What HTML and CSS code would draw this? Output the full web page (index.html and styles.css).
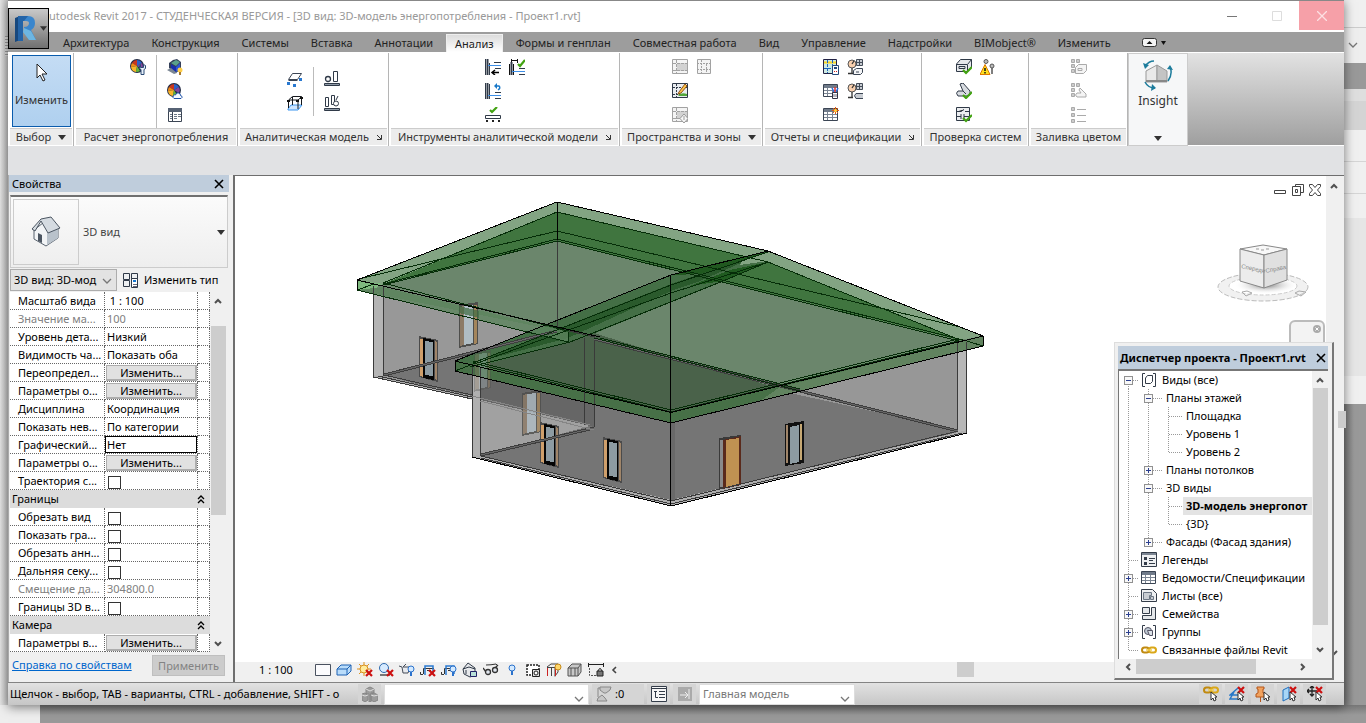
FILE: index.html
```html
<!DOCTYPE html>
<html lang="ru">

<head>
    <meta charset="UTF-8">
    <meta name="viewport" content="width=device-width, initial-scale=1.0">
    <title>Autodesk Revit 2017 - Проект1.rvt</title>
    <link rel="stylesheet" href="styles.css">
</head>

<body>
    <!-- Icon set -->
    <svg class="sprite" aria-hidden="true">
        <symbol id="i-pie" viewBox="0 0 16 16"><circle cx="7" cy="7" r="7" fill="#222b44"/><path d="M7 7V1a6 6 0 0 1 5 3z" fill="#2c62c9"/><path d="M7 7V1a6 6 0 0 0-5 3z" fill="#c9361f"/><path d="M7 7 2 4a6 6 0 0 0-1 4z" fill="#f08a16"/><path d="M7 7 1 8a6 6 0 0 0 5 5z" fill="#f8b52a"/><path d="M7 7l-1 6a6 6 0 0 0 4-1z" fill="#63b83a"/><path d="M7 7l5-3a6 6 0 0 1 0 6z" fill="#8246a0"/></symbol>
        <symbol id="i-energy" viewBox="0 0 16 16"><use href="#i-pie"/><path d="M10.500 5.500v3h3v-3l2 1v3l-1.500 1v5h-3v-5l-1.500-1v-3z" fill="#e8f0fa" stroke="#2b4a74"/></symbol>
        <symbol id="i-cloud" viewBox="0 0 16 16"><use href="#i-pie"/><path d="M7 15.500q-2-1-.5-3 1-1 2-.5 1-3 3-2 2 0 2 2.500 2 .5 1.500 2l-1 1z" fill="#f4f9ff" stroke="#1c50a8"/></symbol>
        <symbol id="i-globe" viewBox="0 0 16 16"><path d="M2 9V4l4-3 4-1 4 3v7l-5 4z" fill="#34405a"/><path d="M4 4l5-3 4 2-4 4z" fill="#5aa08c"/><path d="M4 5l5 3v5L4 10z" fill="#1a2fae"/><path d="M9 8l4-4v6l-4 3z" fill="#2f55d8"/><path d="M0 11l4-2 6 5-3 1z" fill="#7b8794"/><circle cx="13" cy="11" r="2.500" fill="#ffcf4a"/><path d="M12 13h2v3h-2z" fill="#a87a30"/></symbol>
        <symbol id="i-report" viewBox="0 0 16 16"><path d="M1.500 1.500h13v13h-13z" fill="#fff" stroke="#3b4554"/><path d="M1 1h14v4H1z" fill="#566274"/><path d="M3 7.500h2M3 9.500h2M3 11.500h2M7 7.500h3M11 7.500h3M7 9.500h3M11 9.500h3M7 11.500h3" stroke="#6a7686"/><path d="M5.500 5v9" stroke="#3b4554"/></symbol>
        <symbol id="i-slab" viewBox="0 0 16 16"><path d="M1.500 8.500l4-6h9l-4 6zM1.500 9.500h9" fill="#fff" stroke="#3b4554"/><path d="M0 11h3v3H0zM6 13h3v3H6zM12 7h3v3h-3z" fill="#2878d0"/></symbol>
        <symbol id="i-frame" viewBox="0 0 16 16"><path d="M1 14l3-4h11l-4 5H1z" fill="#cfe6ff" stroke="#3d96ef"/><path d="M1.500 13V5l4-3.500h9V10M11 14V5H2M11 5l3.500-3M5.500 2v8" fill="none" stroke="#15181d"/><path d="M0 5h3v2H0zM9 5h3v2H9zM13 2h3v2h-3z" fill="#111"/></symbol>
        <symbol id="i-check1" viewBox="0 0 16 16"><path d="M.5 12.500h15v2H.5z" fill="#8f9ba8" stroke="#303a48"/><circle cx="4" cy="8" r="2.500" fill="#fff" stroke="#303a48" stroke-width="1.300"/><path d="M9.500.5h4v10h-4z" fill="#fff" stroke="#303a48"/></symbol>
        <symbol id="i-check2" viewBox="0 0 16 16"><path d="M.5 13.500h15v2H.5z" fill="#8f9ba8" stroke="#303a48"/><path d="M1.500 2.500h3v9h-3zM7.500.5h3v9h-3z" fill="#fff" stroke="#303a48"/><circle cx="12" cy="8.500" r="2.500" fill="#fff" stroke="#303a48"/><path d="M14 1l-2 4" stroke="#303a48"/></symbol>
        <symbol id="i-wall" viewBox="0 0 16 16"><path d="M.5 0v16M4.500 4v12" stroke="#303a48"/><path d="M2.500 0v16" stroke="#303a48" stroke-width="2"/><path d="M3 6.500h13" stroke="#3d8fe8"/><path d="M16 3.500h-6M9.500 3v1M16 9.500h-6" stroke="#303a48"/></symbol>
        <symbol id="i-adjust" viewBox="0 0 16 16"><use href="#i-wall"/><path d="M8 13.500h6M10 11l-3 2.500 3 2.500" fill="none" stroke="#000" stroke-width="1.500"/></symbol>
        <symbol id="i-undo" viewBox="0 0 16 16"><path d="M.5 0v16M4.500 1v15" stroke="#303a48"/><path d="M2.500 0v16" stroke="#303a48" stroke-width="2"/><path d="M3 12.500h13" stroke="#3d8fe8"/><path d="M16 9.500h-6M16 15.500h-6" stroke="#303a48"/><path d="M10 3h4q2 2-1 4" fill="none" stroke="#1878c8" stroke-width="1.500"/><path d="M12 0v6L9 3z" fill="#1878c8"/></symbol>
        <symbol id="i-wallok" viewBox="0 0 16 16"><path d="M.5 5v11M4.500 5v11M3 1.500h5M2.500 0v4M8.500 0v4" stroke="#111"/><path d="M2.500 3v13" stroke="#303a48" stroke-width="2"/><path d="M3 12.500h13" stroke="#3d8fe8"/><path d="M16 9.500h-6M16 15.500h-6" stroke="#303a48"/><path d="M9 5l2 2 5-6" fill="none" stroke="#42a312" stroke-width="2.200"/></symbol>
        <symbol id="i-beamok" viewBox="0 0 16 16"><path d="M.5 8.500h15v3H.5z" fill="#fff" stroke="#303a48"/><path d="M1 13h2v2H1zM7 13h2v2H7zM13 13h2v2h-2z" fill="#222"/><path d="M5 3l2 2 5-5" fill="none" stroke="#42a312" stroke-width="2.200"/></symbol>
        <symbol id="i-space" viewBox="0 0 16 16"><path d="M.5.5h15v14H.5z" fill="#f4f4f4" stroke="#a2a2a2"/><path d="M5 4h10v8H5z" fill="#d2d2d2"/><path d="M4.500 1v13M1 4.500h14M1 11.500h14" stroke="#a2a2a2" stroke-dasharray="3 1"/></symbol>
        <symbol id="i-spacesep" viewBox="0 0 16 16"><path d="M1.500.5h13v14h-13z" fill="#f4f4f4" stroke="#a2a2a2"/><path d="M5.500 1v13M1 4.500h14M10.500 5v9M1 10.500h14" stroke="#a2a2a2" stroke-dasharray="2 1"/></symbol>
        <symbol id="i-spacetag" viewBox="0 0 16 16"><path d="M.5.5h15v14H.5z" fill="#e9ecef" stroke="#303a48"/><path d="M4.500 1v13M1 4.500h14M1 11.500h14" stroke="#303a48" stroke-dasharray="2 1"/><path d="M6 12q4-3 9-1v2H7z" fill="#53a83b"/><path d="M7 9l6-8 2 2-6 7-3 1z" fill="#ffc549" stroke="#91541a"/></symbol>
        <symbol id="i-zone" viewBox="0 0 16 16"><use href="#i-space"/><path d="M12 7l4 4.500-4 4.500-4-4.500z" fill="#f8f8f8" stroke="#999"/><path d="M12 9v4" stroke="#999"/></symbol>
        <symbol id="i-calc" viewBox="0 0 16 16"><path d="M.5.5h13v14H.5z" fill="#cdeae4" stroke="#224"/><path d="M1 3.500h12" stroke="#ffd61e" stroke-width="2"/><path d="M4.500 1v13M9.500 1v13M1 9.500h9" stroke="#1b63bd" stroke-dasharray="3 1"/><path d="M9.500 6.500h6v9h-6z" fill="#fff" stroke="#244878"/><path d="M11 8h3v2h-3z" fill="#244878"/><path d="M11 12h1v1h-1zM13 12h1v1h-1z" fill="#c22"/></symbol>
        <symbol id="i-sched" viewBox="0 0 16 16"><path d="M.5 1.500h14v12H.5z" fill="#fff" stroke="#3b4554"/><path d="M1 2h13v3H1z" fill="#707b8a"/><path d="M1 7.500h13M1 10.500h13M4.500 5v8M9.500 5v8" stroke="#7b8593"/></symbol>
        <symbol id="i-schedload" viewBox="0 0 16 16"><use href="#i-sched"/><path d="M9 5l2 4M15 5l-2 4" stroke="#2a70e0" stroke-width="1.500"/><path d="M12 4v5" stroke="#d33" stroke-width="1.500"/><path d="M9.500 9.500h5v6h-5z" fill="#fff" stroke="#334"/><path d="M11 11v3M13 11v3" stroke="#667"/></symbol>
        <symbol id="i-schednew" viewBox="0 0 16 16"><use href="#i-sched"/><path d="M12.500 0v7M9 3.500h7M10 1l5 5M15 1l-5 5" stroke="#e85a10"/><circle cx="12.500" cy="3.500" r="1.500" fill="#ffd63b"/></symbol>
        <symbol id="i-gauge" viewBox="0 0 16 16"><path d="M9.500.5h6v6h-6z" fill="#c8ccd2" stroke="#454d59"/><path d="M9 3.500h7M12.500 1v6" stroke="#454d59"/><circle cx="5" cy="5" r="4" fill="#f8cfae" stroke="#555"/><path d="M5 5l2-3M5 9v5M1 14.500h5" stroke="#333" stroke-width="1.300"/></symbol>
        <symbol id="i-gaugebox" viewBox="0 0 16 16"><use href="#i-gauge"/><path d="M6.500 15.500v-4l3-2h6v4l-2 2z" fill="#f4f5f7" stroke="#3b4554"/><path d="M9 13h3" stroke="#3b4554"/></symbol>
        <symbol id="i-gaugepipe" viewBox="0 0 16 16"><use href="#i-gauge"/><path d="M16 10.500H9q-3 2 0 5h7" fill="#c8ccd2" stroke="#3b4554"/></symbol>
        <symbol id="i-duct" viewBox="0 0 16 16"><path d="M.5 12V5l4-4.500h11V8l-4 4.500H.5z" fill="#e6e8eb" stroke="#303a48"/><path d="M.5 5.500h11l4-5M11.500 6v6M3 7.500h6v2H3z" fill="none" stroke="#303a48"/></symbol>
        <symbol id="i-ductok" viewBox="0 0 16 16"><use href="#i-duct"/><path d="M7 11l3 3 6-6" fill="none" stroke="#42a312" stroke-width="2.200"/></symbol>
        <symbol id="i-pipeok" viewBox="0 0 16 16"><path d="M4 1l3-1 7 8v4l-3 1H2q-3-3 0-5h5z" fill="#d8dce1" stroke="#303a48"/><path d="M7 8l3 3" stroke="#303a48"/><path d="M7 12l3 3 6-6" fill="none" stroke="#42a312" stroke-width="2.200"/></symbol>
        <symbol id="i-circuitok" viewBox="0 0 16 16"><path d="M.5.5h13v13H.5z" fill="#eceef0" stroke="#303a48"/><path d="M1 4.500h4l3-2M9 4.500h4M1 9.500h4M5 7v5M8 7v5M8 9.500h5" stroke="#303a48"/><path d="M7 11l3 3 6-6" fill="none" stroke="#42a312" stroke-width="2.200"/></symbol>
        <symbol id="i-warn" viewBox="0 0 16 16"><circle cx="6" cy="2.500" r="2" fill="#bbb" stroke="#555"/><circle cx="12" cy="7" r="2" fill="#bbb" stroke="#555"/><path d="M12 9v6" stroke="#555" stroke-width="1.500"/><path d="M5 5.500l5 10H0z" fill="#ffe01e" stroke="#e07a00"/><path d="M5 9v3M5 13v1.500" stroke="#111" stroke-width="1.500"/></symbol>
        <symbol id="i-legdots" viewBox="0 0 16 16"><path d="M.5.5h3v3h-3zM5.500.5h3v3h-3zM.5 5.500h3v3h-3zM.5 10.500h3v3h-3z" fill="#ccc" stroke="#aaa"/></symbol>
        <symbol id="i-legduct" viewBox="0 0 16 16"><use href="#i-legdots"/><path d="M4.500 14.500v-6l3-3h8v6l-3 3z" fill="#f4f4f4" stroke="#aaa"/><path d="M7 9.500h4v2H7z" fill="none" stroke="#aaa"/></symbol>
        <symbol id="i-legpipe" viewBox="0 0 16 16"><use href="#i-legdots"/><path d="M9 5l6 6v3H6q-3-2 0-4h4L8 7z" fill="#f4f4f4" stroke="#aaa"/></symbol>
        <symbol id="i-legcolor" viewBox="0 0 16 16"><path d="M.5.5h3v3h-3zM.5 6.500h3v3h-3zM.5 12.500h3v3h-3z" fill="#ccc" stroke="#aaa"/><path d="M6 2.500h9M6 8.500h9M6 14.500h9" stroke="#aaa"/></symbol>
        <symbol id="i-arrowdown" viewBox="0 0 8 5"><path d="M0 0h8L4 5z" fill="#333"/></symbol>
        <symbol id="i-launch" viewBox="0 0 6 6"><path d="M1 1l4 4M5.500 1v4.500H1" fill="none" stroke="#333"/></symbol>
        <symbol id="i-chev" viewBox="0 0 10 6"><path d="M1 1l4 4 4-4" fill="none" stroke="#777" stroke-width="1.300"/></symbol>
        <symbol id="i-chevbold" viewBox="0 0 10 6"><path d="M2 1l3 3 3-3" fill="none" stroke="#505050" stroke-width="2"/></symbol>
        <symbol id="i-x" viewBox="0 0 10 10"><path d="M1 1l8 8M9 1L1 9" stroke="#000" stroke-width="1.600"/></symbol>
        <symbol id="i-redx" viewBox="0 0 8 8"><path d="M1 1l6 6M7 1L1 7" stroke="#cc1010" stroke-width="2.200"/></symbol>
        <symbol id="i-collapse" viewBox="0 0 8 9"><path d="M1 4l3-3 3 3M1 8l3-3 3 3" fill="none" stroke="#000" stroke-width="1.300"/></symbol>
        <symbol id="i-cursor" viewBox="0 0 12 19"><path d="M1 1v14l3-3 3 6 2-1-3-6h5z" fill="#fff" stroke="#222"/></symbol>
        <!-- view control bar -->
        <symbol id="v-detail" viewBox="0 0 16 16"><path d="M.5 2.500h15v11H.5z" fill="#fbfbfd" stroke="#4a5260"/></symbol>
        <symbol id="v-style" viewBox="0 0 16 16"><path d="M1 7l4-4h10v6l-4 4H1z" fill="#b9dcfa" stroke="#1e62b4"/><path d="M1 7h10v6M11 7l4-4" fill="none" stroke="#1e62b4"/></symbol>
        <symbol id="v-sun" viewBox="0 0 16 16"><path d="M7 0v14M0 7h14M2 2l10 10M12 2L2 12" stroke="#dd9420"/><circle cx="7" cy="7" r="4" fill="#ffec9c" stroke="#d89020"/><use href="#i-redx" x="8" y="7" width="8" height="8"/></symbol>
        <symbol id="v-shadow" viewBox="0 0 16 16"><path d="M2 13h10" stroke="#777" stroke-width="2"/><circle cx="6" cy="6" r="4.500" fill="#d7ebff" stroke="#2f6aae"/><use href="#i-redx" x="8" y="7" width="8" height="8"/></symbol>
        <symbol id="v-bulb" viewBox="0 0 16 16"><circle cx="8" cy="6" r="3" fill="#d4eaff" stroke="#2b72cc"/><path d="M8 9v4" stroke="#2b72cc" stroke-width="2"/></symbol>
        <symbol id="v-render" viewBox="0 0 16 16"><path d="M0 4l3 1 1 6h5l2-6H4l3-3" fill="#e8eaee" stroke="#454d59"/><use href="#v-bulb" x="4" y="1" width="16" height="16"/></symbol>
        <symbol id="v-crop" viewBox="0 0 16 16"><path d="M.5 10v2.500H3M3.500 12V6.500H14" fill="none" stroke="#333"/><path d="M5 13V4h8v8" fill="none" stroke="#2878d0" stroke-width="1.500"/><path d="M7 8.500h4" stroke="#333"/></symbol>
        <symbol id="v-cropx" viewBox="0 0 16 16"><use href="#v-crop"/><use href="#i-redx" x="8" y="7" width="8" height="8"/></symbol>
        <symbol id="v-cropb" viewBox="0 0 16 16"><use href="#v-crop"/><use href="#v-bulb" x="4" y="1" width="16" height="16"/></symbol>
        <symbol id="v-lock" viewBox="0 0 16 16"><path d="M1 7l5-6 7 5v7l-5 2-6-3z" fill="#e6e8eb" stroke="#303a48"/><path d="M1 7l6-2 6 2M4 8v4" fill="none" stroke="#303a48"/><path d="M8.500 9.500h6v5h-6z" fill="#b8e0d8" stroke="#226"/></symbol>
        <symbol id="v-glasses" viewBox="0 0 16 16"><path d="M0 6l3 4M15 3l-3 3" stroke="#333" stroke-width="1.300"/><circle cx="5" cy="10" r="2.500" fill="#e0e6ee" stroke="#333" stroke-width="1.300"/><circle cx="12" cy="8" r="2.500" fill="#e0e6ee" stroke="#333" stroke-width="1.300"/><path d="M3 3q5 0 10-1l2 2" fill="none" stroke="#333"/></symbol>
        <symbol id="v-temp" viewBox="0 0 16 16"><path d="M2 3h12v10H2z" fill="#fff" stroke="#222" stroke-width="1.500" stroke-dasharray="2 1"/><path d="M7.500 7.500h7v7h-7z" fill="#ddd" stroke="#222"/><circle cx="11" cy="11" r="2" fill="#fff" stroke="#222"/></symbol>
        <symbol id="v-analytic" viewBox="0 0 16 16"><path d="M1 5l4-3h7v8l-3 4M1 5.500h8v9M5.500 5v9" fill="none" stroke="#444"/><path d="M1.500 6v8M9.500 6v8" stroke="#c22"/><circle cx="12" cy="5" r="3" fill="#ffd76a" stroke="#c58a1a"/></symbol>
        <symbol id="v-hilite" viewBox="0 0 16 16"><path d="M1 6l4-4h9v8l-3 4H1z" fill="#c8c8c8" stroke="#555"/><path d="M1 6h10v8M11 6l3-4M4 6v8M8 6v8" fill="none" stroke="#555"/></symbol>
        <symbol id="v-constraint" viewBox="0 0 16 16"><path d="M.5 1v4M15.500 1v4M1 2.500h14" stroke="#222"/><path d="M1.500 6v7.500H9" fill="none" stroke="#555" stroke-dasharray="2 1"/><path d="M9 9h6v5H9z" fill="#777" stroke="#222"/><path d="M10 9q2-5 4 0" fill="none" stroke="#222"/></symbol>
        <!-- status bar -->
        <symbol id="s-cubes" viewBox="0 0 16 16"><path d="M4 3l4-2 4 2v4H9v9H7V8H4zM0 8l3-1 3 2v5l-3 2-3-2zM9 8l3-1 4 2v5l-4 2-3-2z" fill="#9c9c9c" stroke="#858585"/><path d="M4 3l4 2 4-2M0 9l3 1 3-1M9 9l3 1 4-1" fill="none" stroke="#ddd"/></symbol>
        <symbol id="s-filter" viewBox="0 0 16 16"><path d="M4 1h11l-1 3-4 3H8L4 4zM2 12l4-3 3 3 2 3H1z" fill="#c6c6c6" stroke="#888"/><path d="M4 2H2v9" fill="none" stroke="#888"/></symbol>
        <symbol id="s-options" viewBox="0 0 16 16"><path d="M.5.5h15v15H.5z" fill="#f7f7f7" stroke="#333c49"/><path d="M1 2.500h14M3 5.500h3M8 5.500h6M8 8.500h6M8 11.500h6M4.500 6v5.500H7" fill="none" stroke="#333c49"/></symbol>
        <symbol id="s-add" viewBox="0 0 16 16"><path d="M1 1h14v14H1z" fill="#aaa"/><path d="M3 9h7M8 6l3 3-3 3M12 3v10" fill="none" stroke="#eee"/></symbol>
        <symbol id="s-ptr" viewBox="0 0 8 11"><path d="M1 1v8l2-2 1 3 2-1-1-3h2z" fill="#fff" stroke="#333"/></symbol>
        <symbol id="i-link" viewBox="0 0 16 16"><rect x="1" y="5.500" width="7" height="5" rx="2.500" fill="none" stroke="#c08a10" stroke-width="2"/><rect x="8" y="5.500" width="7" height="5" rx="2.500" fill="none" stroke="#daa718" stroke-width="2"/><path d="M5 8h6" stroke="#f2cc4a" stroke-width="1.500"/></symbol>
        <symbol id="s-link" viewBox="0 0 16 16"><use href="#i-link" y="-4"/><use href="#s-ptr" x="7" y="5" width="8" height="11"/></symbol>
        <symbol id="s-under" viewBox="0 0 16 16"><path d="M9 2L1 9h10M5 6l-4 7h12" fill="none" stroke="#2878c8" stroke-width="1.500"/><use href="#i-redx" x="8" width="8" height="8"/><use href="#s-ptr" x="8" y="5" width="8" height="11"/></symbol>
        <symbol id="s-pin" viewBox="0 0 16 16"><path d="M2 1h7v2H8v4l2 1v3H1V8l2-1V3H2z" fill="#f1a25e" stroke="#b5561b"/><path d="M5.500 11v5" stroke="#b5561b"/><use href="#s-ptr" x="8" y="5" width="8" height="11"/></symbol>
        <symbol id="s-face" viewBox="0 0 16 16"><path d="M2 4l6-3v11l-6 3z" fill="#a9d6f6" stroke="#1f6ebc"/><use href="#i-redx" x="8" width="8" height="8"/><use href="#s-ptr" x="8" y="5" width="8" height="11"/></symbol>
        <symbol id="s-drag" viewBox="0 0 16 16"><path d="M5 0v10M0 5h10M3 2l2-2 2 2M3 8l2 2 2-2M2 3L0 5l2 2" fill="none" stroke="#222" stroke-width="1.300"/><use href="#i-redx" x="8" width="8" height="8"/><use href="#s-ptr" x="8" y="5" width="8" height="11"/></symbol>
        <!-- project browser -->
        <symbol id="b-views" viewBox="0 0 16 16"><path d="M4 1.500H1.500v13H4M12 1.500h2.500v13H12" fill="none" stroke="#333c49"/><path d="M4.500 6l2-2.500h5v6l-2 2h-5z" fill="#fff" stroke="#333c49"/></symbol>
        <symbol id="b-legend" viewBox="0 0 16 16"><path d="M.5.5h15v14H.5z" fill="#eef0f2" stroke="#333c49"/><path d="M1 1h14v2H1z" fill="#7b8592"/><path d="M3 5h3v3H3zM3 10h3v3H3z" fill="#333c49"/><path d="M8 6.500h6M8 8.500h4M8 11.500h6" stroke="#333c49"/></symbol>
        <symbol id="b-sheet" viewBox="0 0 16 16"><path d="M.5 1.500h11l4 4v8H.5z" fill="#eef0f2" stroke="#333c49"/><path d="M2.500 4.500h8v3h-2v4h-6zM9.500 8.500h3v3h-3z" fill="#c8cdd3" stroke="#6b7684"/></symbol>
        <symbol id="b-family" viewBox="0 0 16 16"><path d="M1.500 1.500h7v6h-7zM10.500 1.500h4v12h-13v-4h9z" fill="#e4e7ea" stroke="#333c49"/></symbol>
        <symbol id="b-group" viewBox="0 0 16 16"><path d="M4 1.500H1.500v13H4M12 1.500h2.500v13H12" fill="none" stroke="#333c49"/><circle cx="7" cy="7" r="3.500" fill="#bfc9d3" stroke="#556"/><path d="M6.500 6.500h5v5h-3z" fill="#dce2e8" stroke="#556"/></symbol>
        <!-- windows of the model -->
        <symbol id="w-front" viewBox="0 0 20 46"><path d="M0 0l19 4v42L0 41z" fill="#4b4b4b"/><path d="M1 3h3v38l-3-1z" fill="#cf9f6b"/><path d="M4 2l11 2v40L4 42z" fill="#050505"/><path d="M6 5l8 1v34l-8-1z" fill="#8d9ba2"/><path d="M16 5l2 1v38l-2-1z" fill="#a08569"/></symbol>
        <symbol id="w-back" viewBox="0 0 20 46"><path d="M0 3l19-3v42L0 46z" fill="#4e4e4c"/><path d="M1 5l4-1v39l-4 1z" fill="#8c7a66"/><path d="M5 4l9-1v38l-9 2z" fill="#afbcc3"/><path d="M15 3h3v38l-3 1z" fill="#a3855c"/></symbol>
    </svg>

    <div class="desktop">
        <div class="back-left">
            <span class="grip"></span>
        </div>

        <div class="window">
            <button class="app-button" aria-label="Меню приложения">
                <svg width="24" height="28" viewBox="0 0 24 28"><path d="M1 3l5-2v24l-5 2z" fill="#17487e"/><path d="M4 1h10q7 0 7 7 0 5-4 7l5 10h-7l-5-9v-4q5 0 5-4 0-2-3-2H9v20H4z" fill="#3a86cd"/><path d="M10 13l7 3 5 9h-7l-6-8z" fill="#6db6e2"/><path d="M4 1h10l-4 5H9v20H4z" fill="#2464a8"/></svg>
                <svg width="7" height="5"><use href="#i-arrowdown"/></svg>
            </button>

            <header class="titlebar">
                <h1>Autodesk Revit 2017 - СТУДЕНЧЕСКАЯ ВЕРСИЯ - [3D вид: 3D-модель энергопотребления - Проект1.rvt]</h1>
                <button class="win-btn" aria-label="Свернуть"><svg width="10" height="10"><path d="M0 5.500h10" stroke="#777"/></svg></button>
                <button class="win-btn" aria-label="Развернуть"><svg width="10" height="10"><path d="M.5.5h9v9h-9z" fill="none" stroke="#ddd"/></svg></button>
                <button class="win-btn close" aria-label="Закрыть"><svg width="10" height="10"><path d="M0 0l10 10M10 0L0 10" stroke="#fce0e3" stroke-width="1.300"/></svg></button>
            </header>

            <nav class="tabs">
                <button>Архитектура</button>
                <button>Конструкция</button>
                <button>Системы</button>
                <button>Вставка</button>
                <button>Аннотации</button>
                <button class="active">Анализ</button>
                <button>Формы и генплан</button>
                <button>Совместная работа</button>
                <button>Вид</button>
                <button>Управление</button>
                <button>Надстройки</button>
                <button>BIMobject®</button>
                <button>Изменить</button>
                <button class="ribbon-toggle" aria-label="Свернуть ленту">
                    <svg width="24" height="9"><rect x=".5" y=".5" width="14" height="8" rx="2" fill="#f4f4f4" stroke="#333"/><path d="M4.500 6h6l-3-3zM19 3h5l-2.500 4z" fill="#111"/></svg>
                </button>
            </nav>

            <div class="ribbon">
                <section class="panel">
                    <button class="modify"><svg width="12" height="19"><use href="#i-cursor"/></svg>Изменить</button>
                    <footer>Выбор <svg width="8" height="5"><use href="#i-arrowdown"/></svg></footer>
                </section>
                <section class="panel">
                    <div class="tools">
                        <div class="col"><button class="tool" aria-label="Параметры энергопотребления"><svg><use href="#i-energy"/></svg></button></div>
                        <div class="sep"></div>
                        <div class="col">
                            <button class="tool" aria-label="Создать энергомодель"><svg><use href="#i-globe"/></svg></button>
                            <button class="tool" aria-label="Запустить расчет"><svg><use href="#i-cloud"/></svg></button>
                            <button class="tool" aria-label="Результаты"><svg><use href="#i-report"/></svg></button>
                        </div>
                    </div>
                    <footer>Расчет энергопотребления</footer>
                </section>
                <section class="panel">
                    <div class="tools middle">
                        <div class="col">
                            <button class="tool" aria-label="Граничные условия"><svg><use href="#i-slab"/></svg></button>
                            <button class="tool" aria-label="Нагрузки"><svg><use href="#i-frame"/></svg></button>
                        </div>
                        <div class="sep"></div>
                        <div class="col">
                            <button class="tool" aria-label="Проверка опор"><svg><use href="#i-check1"/></svg></button>
                            <button class="tool" aria-label="Проверка согласованности"><svg><use href="#i-check2"/></svg></button>
                        </div>
                    </div>
                    <footer>Аналитическая модель <svg width="6" height="6"><use href="#i-launch"/></svg></footer>
                </section>
                <section class="panel">
                    <div class="tools tight">
                        <div class="col">
                            <button class="tool" aria-label="Выровнять"><svg><use href="#i-adjust"/></svg></button>
                            <button class="tool" aria-label="Сброс"><svg><use href="#i-undo"/></svg></button>
                            <button class="tool" aria-label="Включить модель"><svg><use href="#i-beamok"/></svg></button>
                        </div>
                        <div class="col"><button class="tool" aria-label="Проверить"><svg><use href="#i-wallok"/></svg></button></div>
                    </div>
                    <footer>Инструменты аналитической модели <svg width="6" height="6"><use href="#i-launch"/></svg></footer>
                </section>
                <section class="panel">
                    <div class="tools tight">
                        <div class="col">
                            <button class="tool" aria-label="Пространство"><svg><use href="#i-space"/></svg></button>
                            <button class="tool" aria-label="Марка пространства"><svg><use href="#i-spacetag"/></svg></button>
                            <button class="tool" aria-label="Зона"><svg><use href="#i-zone"/></svg></button>
                        </div>
                        <div class="col"><button class="tool" aria-label="Разделитель пространств"><svg><use href="#i-spacesep"/></svg></button></div>
                    </div>
                    <footer>Пространства и зоны <svg width="8" height="5"><use href="#i-arrowdown"/></svg></footer>
                </section>
                <section class="panel">
                    <div class="tools tight">
                        <div class="col">
                            <button class="tool" aria-label="Нагрузки на отопление"><svg><use href="#i-calc"/></svg></button>
                            <button class="tool" aria-label="Ведомость щитов"><svg><use href="#i-schedload"/></svg></button>
                            <button class="tool" aria-label="Спецификация"><svg><use href="#i-schednew"/></svg></button>
                        </div>
                        <div class="col">
                            <button class="tool" aria-label="Отчет о воздуховодах"><svg><use href="#i-gaugebox"/></svg></button>
                            <button class="tool" aria-label="Отчет о трубах"><svg><use href="#i-gaugepipe"/></svg></button>
                        </div>
                    </div>
                    <footer>Отчеты и спецификации <svg width="6" height="6"><use href="#i-launch"/></svg></footer>
                </section>
                <section class="panel">
                    <div class="tools tight">
                        <div class="col">
                            <button class="tool" aria-label="Проверить воздуховоды"><svg><use href="#i-ductok"/></svg></button>
                            <button class="tool" aria-label="Проверить трубы"><svg><use href="#i-pipeok"/></svg></button>
                            <button class="tool" aria-label="Проверить цепи"><svg><use href="#i-circuitok"/></svg></button>
                        </div>
                        <div class="col"><button class="tool" aria-label="Показать разъединения"><svg><use href="#i-warn"/></svg></button></div>
                    </div>
                    <footer>Проверка систем</footer>
                </section>
                <section class="panel">
                    <div class="tools tight">
                        <div class="col">
                            <button class="tool" aria-label="Легенда воздуховодов"><svg><use href="#i-legduct"/></svg></button>
                            <button class="tool" aria-label="Легенда труб"><svg><use href="#i-legpipe"/></svg></button>
                            <button class="tool" aria-label="Легенда заливки"><svg><use href="#i-legcolor"/></svg></button>
                        </div>
                    </div>
                    <footer>Заливка цветом</footer>
                </section>
                <button class="insight">
                    <svg width="30" height="32" viewBox="0 0 30 32"><path d="M3 11l11-6v17H3z" fill="#e9e9e9" stroke="#999"/><path d="M14 5l10 6v11H14z" fill="#c4c4c4" stroke="#999"/><path d="M3 20h21v2H3z" fill="#888"/><path d="M2 6q4-5 9-5M27 7q3 7-2 14M2 22q3 6 10 6" fill="none" stroke="#1c7c9c" stroke-width="1.500"/><path d="M0 3l2 6 4-4zM24 9l3-4 3 5zM9 24l4 4-5 3z" fill="#1c7c9c"/></svg>
                    <span>Insight</span>
                    <svg width="8" height="5"><use href="#i-arrowdown"/></svg>
                </button>
                <div class="ribbon-rest"></div>
            </div>

            <div class="options-bar"></div>

            <main class="work">
                <aside class="palette">
                    <div class="palette-title">Свойства <button aria-label="Закрыть свойства"><svg width="10" height="10"><use href="#i-x"/></svg></button></div>
                    <button class="type-selector">
                        <span class="type-thumb">
                            <svg width="32" height="32" viewBox="0 0 32 32"><path d="M4 14v9l12 7 12-8V12L18 3z" fill="#f2f4f6" stroke="#59636f"/><path d="M17 17v12l11-7V12z" fill="#b9c2cb"/><path d="M2 13l9-10 10-2 9 11-12 5L11 5 5 15z" fill="#d5dbe1" stroke="#4c5662"/><path d="M8 17l4 2v8l-4-2z" fill="#4c5662"/></svg>
                        </span>
                        <span class="type-name">3D вид</span>
                        <svg width="8" height="5"><use href="#i-arrowdown"/></svg>
                    </button>
                    <div class="filter-row">
                        <label class="select-box">
                            <select aria-label="Фильтр свойств"><option>3D вид: 3D-мод</option></select>
                            <svg width="10" height="6"><use href="#i-chev"/></svg>
                        </label>
                        <button class="edit-type">
                            <svg width="16" height="16"><path d="M.5 1.500h6v6h-6zM8.500 1.500h6v6h-6zM.5 8.500h6v6h-6z" fill="#eef0f2" stroke="#303a48"/><path d="M8.500 6.500h6v9h-6z" fill="#fff" stroke="#303a48"/><path d="M10 8h3v2h-3z" fill="#1878d0"/><path d="M10 12.500h4M10 14.500h4" stroke="#667"/></svg>
                            Изменить тип
                        </button>
                    </div>
                    <div class="props">
                        <table>
                            <colgroup><col class="c-name"><col class="c-value"><col class="c-link"></colgroup>
                            <tr><td>Масштаб вида</td><td>&nbsp;1 : 100</td><td></td></tr>
                            <tr class="off"><td>Значение ма...</td><td>100</td><td></td></tr>
                            <tr><td>Уровень дета...</td><td>Низкий</td><td></td></tr>
                            <tr><td>Видимость ча...</td><td>Показать оба</td><td></td></tr>
                            <tr><td>Переопредел...</td><td class="b"><button>Изменить...</button></td><td></td></tr>
                            <tr><td>Параметры о...</td><td class="b"><button>Изменить...</button></td><td></td></tr>
                            <tr><td>Дисциплина</td><td>Координация</td><td></td></tr>
                            <tr><td>Показать нев...</td><td>По категории</td><td></td></tr>
                            <tr><td>Графический...</td><td class="b"><input type="text" value="Нет" aria-label="Графический стиль"></td><td></td></tr>
                            <tr><td>Параметры о...</td><td class="b"><button>Изменить...</button></td><td></td></tr>
                            <tr><td>Траектория с...</td><td><input type="checkbox" aria-label="Траектория солнца"></td><td></td></tr>
                            <tr class="group"><th colspan="3"><span>Границы <svg width="8" height="9"><use href="#i-collapse"/></svg></span></th></tr>
                            <tr><td>Обрезать вид</td><td><input type="checkbox" aria-label="Обрезать вид"></td><td></td></tr>
                            <tr><td>Показать гра...</td><td><input type="checkbox" aria-label="Показать границу"></td><td></td></tr>
                            <tr><td>Обрезать анн...</td><td><input type="checkbox" aria-label="Обрезать аннотации"></td><td></td></tr>
                            <tr><td>Дальняя секу...</td><td><input type="checkbox" aria-label="Дальняя секущая"></td><td></td></tr>
                            <tr class="off"><td>Смещение да...</td><td>304800.0</td><td></td></tr>
                            <tr><td>Границы 3D в...</td><td><input type="checkbox" aria-label="Границы 3D вида"></td><td></td></tr>
                            <tr class="group"><th colspan="3"><span>Камера <svg width="8" height="9"><use href="#i-collapse"/></svg></span></th></tr>
                            <tr><td>Параметры в...</td><td class="b"><button>Изменить...</button></td><td></td></tr>
                        </table>
                        <div class="vscroll props-scroll">
                            <svg class="up" width="10" height="6"><use href="#i-chevbold"/></svg>
                            <i class="thumb"></i>
                            <svg width="10" height="6"><use href="#i-chevbold"/></svg>
                        </div>
                    </div>
                    <div class="palette-foot">
                        <a href="#">Справка по свойствам</a>
                        <button disabled>Применить</button>
                    </div>
                </aside>

                <section class="view">
                    <div class="canvas">
                        <svg class="model" width="640" height="320" viewBox="350 195 640 320">
                            <!-- walls -->
                            <path d="M373 286L373 377L472 399L594 427L594 330L557 240z" fill="#989898"/>
                            <path d="M384 375L557 330L594 340V427L472 399z" fill="#757575"/>
                            <path d="M373 286h10v91h-10z" fill="#b4b4b4"/>
                            <path d="M472 366V457L671 506L967 433V342L671 300z" fill="#757575"/>
                            <path d="M472 366V399L594 427V338z" fill="#666"/>
                            <path d="M481 400L590 426L481 455z" fill="#a1a1a1"/>
                            <path d="M472 366h9v91h-9z" fill="#b0b0b0"/>
                            <path d="M790 393L958 430V345L803 385z" fill="#979797"/>
                            <path d="M958 345h9v88h-9z" fill="#b8b8b8"/>
                            <path d="M373 375L472 396v3l-99-22zM472 454L671 500L967 430v3L671 506L472 457z" fill="#aeaeae"/>
                            <path d="M671 420h4v80h-4z" fill="#696969"/>
                            <!-- roof -->
                            <path d="M557 202L768 251L983 336V346L671 423L455 371V361L540 327L357 290V280z" fill="#6b866c"/>
                            <path d="M481 357L594 333L671 357L778 388L671 412L473 364z" fill="#4a624a"/>
                            <path d="M357 280L557 202L768 251L983 336L960 340L768 262L557 212L383 284z" fill="#83a483"/>
                            <path d="M557 212L768 262L963 341L557 241L383 284z" fill="#40753f"/>
                            <path d="M357 280L383 284L372 290L357 290zM963 341L983 336V346L968 343z" fill="#7fb97f"/>
                            <path d="M455 361L671 275L740 258L768 262L723 281L593 334L568 342L473 368L455 371z" fill="#446f46"/>
                            <path d="M480 360L671 284L768 251L700 281L671 291L568 338L500 356z" fill="#2a5a2c"/>
                            <path d="M768 262L723 281L690 286L730 270z" fill="#1f5a1f"/>
                            <path d="M743 258L768 252V261L740 265z" fill="#83a483"/>
                            <path d="M671 275L768 251L735 264L700 274z" fill="#20581f"/>
                            <path d="M455 361L473 363L671 412L983 336V346L671 423L455 371z" fill="#477047"/>
                            <path d="M780 387L983 336V346L760 401z" fill="#61835f"/>
                            <path d="M383 287L568 332V342L357 290z" fill="#5d855e" opacity=".8"/>
                            <!-- openings -->
                            <use href="#w-back" x="459" y="302" width="20" height="46"/>
                            <path d="M459 306L479 311V318L459 313z" fill="#3f6b42" opacity=".7"/>
                            <use href="#w-front" x="419" y="336" width="20" height="46"/>
                            <use href="#w-back" x="474" y="349" width="18" height="44" opacity=".35"/>
                            <use href="#w-back" x="522" y="390" width="20" height="46" opacity=".8"/>
                            <use href="#w-front" x="540" y="422" width="20" height="46"/>
                            <use href="#w-front" x="603" y="437" width="20" height="46"/>
                            <path d="M785 424l19-3v42l-19 3z" fill="#111"/><path d="M786 425h2v38h-2z" fill="#a08569"/><path d="M790 427l9-2v37l-9 2z" fill="#8d9ba2"/><path d="M800 424h2v36h-2z" fill="#c6a873"/>
                            <path d="M719 438l22-3v50l-22 4z" fill="#3a3a3a"/><path d="M720 440h3v47h-3z" fill="#8a8a8a"/><path d="M723 440l18-4v49l-18 4z" fill="#5a2a1c"/><path d="M726 440l13-2v46l-13 4z" fill="#c09252"/>
                            <!-- edges -->
                            <g fill="none" stroke="#3a3a3a" stroke-width="1">
                                <path d="M373.500 286V377L472 399M383.500 287V376M557 328L594 337M384 375L472 395M557.500 240V328"/>
                                <path d="M594.500 336V427M584.500 338V425M472.500 366V457M480.500 368V456M957.500 342V430M966.500 342V433"/>
                                <path d="M481 456L671 501L958 431M481 458L671 504L962 433M378 376L472 397"/>
                            </g>
                            <path d="M384 375L557 331M481 455L594 428M594 339L958 431" fill="none" stroke="#3d3d3d" stroke-width="3"/>
                            <path d="M384 375L557 331M481 455L594 428M594 339L958 431" fill="none" stroke="#666" stroke-width="1"/>
                            <path d="M472 396L590 425M480 401L594 430" stroke="#858585" stroke-width="1"/>
                            <g fill="none" stroke="#052d08" stroke-width="1">
                                <path d="M357 279.500L557 231L960 327L983 336M357 290L568 342V332"/>
                                <path d="M383 285L557 241L963 342M383 284L557 239L963 340M557 212L383 283M557 212L768 262L960 340"/>
                                <path d="M473 363L671 285L768 252M480 362L671 293L768 262M470 367L570 342L593 333L723 281L768 262"/>
                                <path d="M383 283L568 331M594 338L800 391M600 338L800 389"/>
                                <path d="M473 363L671 412L958 341M473 361L671 410L958 339"/>
                                <path d="M357 290L374 284M983 346L960 339M455 371L473 364"/>
                            </g>
                            <g fill="none" stroke="#000" stroke-width="1">
                                <path d="M357.500 280V290M357 280L557 202L768 251L983 336V346L671 423L455 371V361L671 275L768 251M557.500 202V240"/>
                                <path d="M455 361L671 412.500L983 336M357 280L600 337"/>
                                <path d="M670.500 275V506M472 457L671 506L967 433"/>
                            </g>
                        </svg>

                        <div class="doc-buttons">
                            <button aria-label="Свернуть вид"><svg width="14" height="12"><path d="M1.500 6.500h11v3h-11z" fill="#fff" stroke="#444"/></svg></button>
                            <button aria-label="Восстановить вид"><svg width="12" height="12"><path d="M3.500.5h8v8h-8z" fill="#fff" stroke="#444"/><path d="M.5 2.500h8v9h-8z" fill="#fff" stroke="#444"/><path d="M3.500 5.500h2v3h-2z" fill="none" stroke="#444"/></svg></button>
                            <button aria-label="Закрыть вид"><svg width="12" height="12"><path d="M.5.5h3l2.500 3 2.500-3h3v2L8.500 6l3 3.500v2h-3L6 8.500l-2.500 3h-3v-2l3-3.500-3-3.500z" fill="#fff" stroke="#444"/></svg></button>
                        </div>

                        <svg class="view-cube" width="94" height="64" viewBox="1216 241 94 64">
                            <defs><radialGradient id="cubeShade"><stop offset="0" stop-color="#777"/><stop offset="1" stop-color="#fff" stop-opacity="0"/></radialGradient></defs>
                            <ellipse cx="1263" cy="287" rx="45" ry="14" fill="#f1f1f1" stroke="#bbb" stroke-dasharray="5 2"/>
                            <ellipse cx="1263" cy="286" rx="34" ry="9" fill="#fff" stroke="#ccc" stroke-dasharray="4 2"/>
                            <ellipse cx="1266" cy="285" rx="32" ry="9" fill="url(#cubeShade)"/>
                            <path d="M1240 249l23-4 24 4-23 6z" fill="#f8f8f8" stroke="#888"/>
                            <path d="M1240 249l24 6v33l-24-7z" fill="#ececec" stroke="#888"/>
                            <path d="M1264 255l23-6v31l-23 8z" fill="#e0e0e0" stroke="#888"/>
                            <path d="M1256 249h3M1261 250h3M1266 249h3" stroke="#999"/>
                            <path d="M1242 292l4 4 6-3-5-2zM1306 292l-5 4-6-3 4-2z" fill="none" stroke="#aaa"/>
                            <text x="1241" y="268" transform="rotate(12 1241 268)">Спереди</text>
                            <text x="1266" y="273" transform="rotate(-12 1266 273)">Справа</text>
                        </svg>

                        <div class="nav-bar">
                            <svg width="8" height="8"><circle cx="4" cy="4" r="4" fill="#aaa"/><path d="M2.500 2.500l3 3M5.500 2.500l-3 3" stroke="#fff"/></svg>
                        </div>
                    </div>
                    <div class="vscroll view-scroll">
                        <svg class="up" width="10" height="6"><use href="#i-chevbold"/></svg>
                        <i class="thumb"></i>
                        <svg width="10" height="6"><use href="#i-chevbold"/></svg>
                    </div>
                    <div class="view-controls">
                        <button class="scale">1 : 100</button>
                        <button class="vc" aria-label="Уровень детализации"><svg><use href="#v-detail"/></svg></button>
                        <button class="vc" aria-label="Визуальный стиль"><svg><use href="#v-style"/></svg></button>
                        <button class="vc" aria-label="Траектория солнца"><svg><use href="#v-sun"/></svg></button>
                        <button class="vc" aria-label="Тени"><svg><use href="#v-shadow"/></svg></button>
                        <button class="vc" aria-label="Визуализация"><svg><use href="#v-render"/></svg></button>
                        <button class="vc" aria-label="Обрезать вид"><svg><use href="#v-cropx"/></svg></button>
                        <button class="vc" aria-label="Показать границу"><svg><use href="#v-cropb"/></svg></button>
                        <button class="vc" aria-label="Заблокировать вид"><svg><use href="#v-lock"/></svg></button>
                        <button class="vc" aria-label="Временное скрытие"><svg><use href="#v-glasses"/></svg></button>
                        <button class="vc" aria-label="Скрытые элементы"><svg><use href="#v-bulb"/></svg></button>
                        <button class="vc" aria-label="Временные свойства"><svg><use href="#v-temp"/></svg></button>
                        <button class="vc" aria-label="Аналитическая модель"><svg><use href="#v-analytic"/></svg></button>
                        <button class="vc" aria-label="Наборы смещений"><svg><use href="#v-hilite"/></svg></button>
                        <button class="vc" aria-label="Зависимости"><svg><use href="#v-constraint"/></svg></button>
                        <svg class="left" width="6" height="10"><path d="M5 2L2 5l3 3" fill="none" stroke="#444" stroke-width="1.600"/></svg>
                        <div class="htrack"><i></i></div>
                    </div>
                </section>

                <!-- Floating project browser -->
                <aside class="browser">
                    <div class="palette-title">Диспетчер проекта - Проект1.rvt <button aria-label="Закрыть диспетчер"><svg width="10" height="10"><use href="#i-x"/></svg></button></div>
                    <div class="browser-body">
                        <div class="tree">
                            <div class="node"><i class="g top h"><button class="tg minus" aria-label="Свернуть"></button></i><i class="ic"><svg><use href="#b-views"/></svg></i><span>Виды (все)</span></div>
                            <div class="node"><i class="g v"></i><i class="g v h"><button class="tg minus" aria-label="Свернуть"></button></i><i class="dash"></i><span>Планы этажей</span></div>
                            <div class="node"><i class="g v"></i><i class="g v"></i><i class="g v h"></i><i class="dash"></i><span>Площадка</span></div>
                            <div class="node"><i class="g v"></i><i class="g v"></i><i class="g v h"></i><i class="dash"></i><span>Уровень 1</span></div>
                            <div class="node"><i class="g v"></i><i class="g v"></i><i class="g end h"></i><i class="dash"></i><span>Уровень 2</span></div>
                            <div class="node"><i class="g v"></i><i class="g v h"><button class="tg plus" aria-label="Развернуть"></button></i><i class="dash"></i><span>Планы потолков</span></div>
                            <div class="node"><i class="g v"></i><i class="g v h"><button class="tg minus" aria-label="Свернуть"></button></i><i class="dash"></i><span>3D виды</span></div>
                            <div class="node"><i class="g v"></i><i class="g v"></i><i class="g v h"></i><i class="dash"></i><span class="current">3D-модель энергопот</span></div>
                            <div class="node"><i class="g v"></i><i class="g v"></i><i class="g end h"></i><i class="dash"></i><span>{3D}</span></div>
                            <div class="node"><i class="g v"></i><i class="g end h"><button class="tg plus" aria-label="Развернуть"></button></i><i class="dash"></i><span>Фасады (Фасад здания)</span></div>
                            <div class="node"><i class="g v h"></i><i class="ic"><svg><use href="#b-legend"/></svg></i><span>Легенды</span></div>
                            <div class="node"><i class="g v h"><button class="tg plus" aria-label="Развернуть"></button></i><i class="ic"><svg><use href="#i-sched"/></svg></i><span>Ведомости/Спецификации</span></div>
                            <div class="node"><i class="g v h"></i><i class="ic"><svg><use href="#b-sheet"/></svg></i><span>Листы (все)</span></div>
                            <div class="node"><i class="g v h"><button class="tg plus" aria-label="Развернуть"></button></i><i class="ic"><svg><use href="#b-family"/></svg></i><span>Семейства</span></div>
                            <div class="node"><i class="g v h"><button class="tg plus" aria-label="Развернуть"></button></i><i class="ic"><svg><use href="#b-group"/></svg></i><span>Группы</span></div>
                            <div class="node"><i class="g end h"></i><i class="ic"><svg><use href="#i-link"/></svg></i><span>Связанные файлы Revit</span></div>
                        </div>
                        <div class="vscroll tree-scroll">
                            <svg class="up" width="10" height="6"><use href="#i-chevbold"/></svg>
                            <i class="thumb"></i>
                            <svg width="10" height="6"><use href="#i-chevbold"/></svg>
                        </div>
                    </div>
                    <div class="hscroll">
                        <svg width="6" height="10"><path d="M5 2L2 5l3 3" fill="none" stroke="#505050" stroke-width="2"/></svg>
                        <i></i>
                        <svg width="6" height="10"><path d="M1 2l3 3-3 3" fill="none" stroke="#505050" stroke-width="2"/></svg>
                    </div>
                </aside>
            </main>

            <footer class="status">
                <p>Щелчок - выбор, TAB - варианты, CTRL - добавление, SHIFT - о</p>
                <button class="st" aria-label="Рабочие наборы"><svg><use href="#s-cubes"/></svg></button>
                <label class="select-box workset">
                    <select aria-label="Рабочий набор"><option></option></select>
                    <svg width="10" height="6"><use href="#i-chev"/></svg>
                </label>
                <button class="st count"><svg><use href="#s-filter"/></svg>:0</button>
                <button class="st" aria-label="Варианты конструкции"><svg><use href="#s-options"/></svg></button>
                <button class="st" aria-label="Добавить к набору"><svg><use href="#s-add"/></svg></button>
                <label class="select-box design">
                    <select aria-label="Вариант"><option>Главная модель</option></select>
                    <svg width="10" height="6"><use href="#i-chev"/></svg>
                </label>
                <div class="picks">
                    <button class="st" aria-label="Выбор связей"><svg><use href="#s-link"/></svg></button>
                    <button class="st" aria-label="Выбор подложки"><svg><use href="#s-under"/></svg></button>
                    <button class="st" aria-label="Выбор закрепленных"><svg><use href="#s-pin"/></svg></button>
                    <button class="st" aria-label="Выбор по грани"><svg><use href="#s-face"/></svg></button>
                    <button class="st" aria-label="Перетаскивание"><svg><use href="#s-drag"/></svg></button>
                </div>
            </footer>
        </div>

        <div class="back-right">
            <div class="r-top"></div>
            <div class="r-drop"><svg width="10" height="6"><use href="#i-chev"/></svg></div>
            <div class="r-dark"></div>
            <div class="r-mid"></div>
            <div class="r-rows"></div>
            <div class="r-plain"></div>
            <div class="r-rows small"></div>
        </div>
        <div class="back-bottom"></div>
    </div>
</body>

</html>
```
FILE: styles.css
```css
:root {
    --chrome: #f0f0f0;
    --tabs: #9d9d9d;
    --title-blue: #bfcddc;
    --thumb: #cdcdcd;
    --line: #848484;
}

* {
    margin: 0;
    padding: 0;
    box-sizing: border-box;
}

body {
    font-family: "Noto Sans", "Open Sans", sans-serif;
    font-size: 11px;
    line-height: 16px;
    color: #000;
    overflow: hidden;
}

button,
input,
select {
    font: inherit;
    color: inherit;
    background: none;
    border: none;
}

svg {
    display: block;
    flex: none;
}

.sprite {
    position: absolute;
    width: 0;
    height: 0;
}

/* desktop behind the window */
.desktop {
    display: grid;
    grid-template: minmax(0, 1fr) 18px / 8px minmax(0, 1fr) 22px;
    height: 100vh;
    background: #999;
}

.back-left {
    background: linear-gradient(90deg, #e4e4e4, #c2c2c2);
    padding-top: 36px;
}

.back-left .grip {
    display: block;
    height: 20px;
    margin-left: 5px;
    background: repeating-linear-gradient(#999 0 1px, #ddd 1px 3px);
}

.back-bottom {
    grid-column: 1 / -1;
    background: linear-gradient(90deg, #eee 40px, transparent 40px), linear-gradient(#777, #999 10px);
}

.back-right {
    display: flex;
    flex-direction: column;
    background: linear-gradient(90deg, #777, #999 10px);
}

.r-top {
    height: 28px;
    background: #f0f0f0;
    border-bottom: 1px solid #ccc;
}

.r-drop {
    height: 35px;
    padding: 14px 4px;
    background: #eee;
}

.r-dark {
    height: 26px;
    background: #999;
}

.r-mid {
    height: 41px;
    background: #d4d4d4;
    border-top: 12px solid #dedede;
}

.r-rows {
    height: 88px;
    background: repeating-linear-gradient(#f0f0f0 0 31px, #d5d5d5 31px 32px);
}

.r-plain {
    height: 158px;
    background: #e6e6e6;
}

.r-rows.small {
    height: 28px;
}

/* main window */
.window {
    position: relative;
    display: flex;
    flex-direction: column;
    background: var(--chrome);
    border-top: 1px solid #888;
    box-shadow: 0 2px 10px rgba(0, 0, 0, 0.5);
}

.app-button {
    position: absolute;
    left: 0;
    top: 7px;
    width: 41px;
    height: 41px;
    padding-left: 5px;
    display: flex;
    align-items: center;
    gap: 2px;
    border: 1px solid #000;
    background: linear-gradient(#c9c9c9, #707070);
    z-index: 2;
}

.titlebar {
    display: flex;
    height: 31px;
    background: #fff;
}

.titlebar h1 {
    flex: 1;
    padding-left: 34px;
    font-size: 11px;
    font-weight: 400;
    line-height: 30px;
    color: #999;
    white-space: nowrap;
}

.win-btn {
    display: grid;
    place-items: center;
    width: 45px;
    height: 29px;
}

.win-btn.close {
    background: #f6a0a8;
}

.tabs {
    display: flex;
    align-items: flex-end;
    height: 20px;
    padding-left: 44px;
    background: var(--tabs);
    color: #222;
}

.tabs button {
    height: 18px;
    padding: 0 11px;
    line-height: 16px;
    white-space: nowrap;
}

.tabs .active {
    padding: 0 8px;
    margin: 0 2px;
    background: linear-gradient(#dcdcdc, #fff);
    border: 1px solid #eee;
    border-bottom: none;
    line-height: 15px;
}

.tabs .ribbon-toggle {
    margin-left: 9px;
    padding-bottom: 1px;
}

.ribbon {
    display: grid;
    grid-template-columns: 66px 164px 151px 231px 143px 159px 107px 99px 60px minmax(0, 1fr);
    height: 94px;
    padding-top: 1px;
    background: #fff;
}

.panel {
    display: flex;
    flex-direction: column;
    padding: 0 1px 1px 2px;
    border-right: 1px solid #b5b5b5;
    min-width: 0;
}

.panel footer {
    display: flex;
    align-items: center;
    justify-content: center;
    gap: 7px;
    height: 17px;
    background: #ececec;
    border-top: 1px solid #ccc;
    color: #333;
    white-space: nowrap;
}

.modify {
    flex: 1;
    display: flex;
    flex-direction: column;
    align-items: center;
    gap: 10px;
    margin: 2px 1px 1px 2px;
    padding-top: 7px;
    border: 1px solid #0a5cad;
    background: linear-gradient(#c4dcf4, #afd0ef);
    color: #333;
}

.tools {
    flex: 1;
    display: flex;
    justify-content: center;
    gap: 6px;
    padding-top: 2px;
}

.tools.tight {
    gap: 0;
}

.tools.middle {
    padding: 14px 0 12px;
}

.sep {
    width: 1px;
    background: #bbb;
}

.tool {
    display: grid;
    place-items: center;
    width: 24px;
    height: 24px;
}

.tool svg,
.vc svg,
.st svg,
.ic svg {
    width: 16px;
    height: 16px;
}

.insight {
    display: flex;
    flex-direction: column;
    align-items: center;
    padding: 6px 0 4px;
    background: #f6f7f8;
    border: 1px solid #ccc;
    color: #333;
    font-size: 12px;
}

.insight span {
    margin-top: 1px;
    flex: 1;
}

.ribbon-rest {
    background: linear-gradient(#e2e2e2, #9f9f9f);
    margin-bottom: 1px;
}

.options-bar {
    height: 29px;
    background: #e1e2e4;
}

.work {
    position: relative;
    display: flex;
    flex: 1;
    min-height: 0;
}

/* properties palette */
.palette {
    display: flex;
    flex-direction: column;
    width: 221px;
    padding-bottom: 4px;
    border-left: 1px solid #aaa;
}

.palette-title {
    display: flex;
    justify-content: space-between;
    align-items: center;
    height: 17px;
    padding: 0 5px 0 3px;
    background: var(--title-blue);
    white-space: nowrap;
}

.type-selector {
    display: flex;
    align-items: center;
    height: 73px;
    margin: 3px 1px 0;
    padding: 2px;
    border: 1px solid #ccc;
    border-top: 2px solid #707070;
    background: linear-gradient(#fbfbfb, #eee);
    color: #444;
    text-align: left;
}

.type-thumb {
    display: grid;
    place-items: center;
    width: 66px;
    height: 66px;
    border: 1px solid #ccc;
}

.type-name {
    flex: 1;
    padding-left: 4px;
}

.filter-row {
    display: flex;
    align-items: center;
    gap: 6px;
    height: 24px;
    padding-left: 1px;
}

.select-box {
    position: relative;
    display: block;
    height: 22px;
    border: 1px solid #adadad;
    background: #e3e3e3;
}

.select-box select {
    appearance: none;
    width: 100%;
    height: 100%;
    padding: 0 18px 0 3px;
}

.select-box svg {
    position: absolute;
    right: 4px;
    top: 8px;
}

.filter-row .select-box {
    width: 107px;
}

.edit-type {
    display: flex;
    align-items: center;
    gap: 5px;
    white-space: nowrap;
}

.props {
    flex: 1;
    display: flex;
    min-height: 0;
    padding-left: 1px;
}

.props table {
    width: 200px;
    height: 360px;
    table-layout: fixed;
    border-collapse: separate;
    border-spacing: 0;
    background: #fff;
}

.c-name {
    width: 95px;
}

.c-value {
    width: 93px;
}

.props tr {
    height: 18px;
}

.props td {
    height: 18px;
    padding-left: 2px;
    line-height: 16px;
    border-right: 1px dotted #666;
    border-bottom: 1px dotted #666;
    white-space: nowrap;
}

.props td:first-child {
    padding-left: 8px;
}

.props td.b {
    padding: 0;
}

.props .off {
    color: #808080;
}

.props td button {
    display: block;
    width: 91px;
    height: 16px;
    margin-left: 1px;
    line-height: 14px;
    background: #e1e1e1;
    border: 1px solid #adadad;
    border-width: 1px 2px 2px 1px;
}

.props input[type="text"] {
    display: block;
    width: 100%;
    height: 17px;
    padding-left: 1px;
    border: 1px solid #000;
}

.props input[type="checkbox"] {
    appearance: none;
    display: block;
    width: 13px;
    height: 13px;
    margin: 3px 0 0 1px;
    border: 1px solid #333;
    background: #fff;
}

.props th {
    padding: 0 5px 0 2px;
    background: #dcdcdc;
    font-weight: 400;
}

.props th span {
    display: flex;
    justify-content: space-between;
    align-items: center;
}

.vscroll {
    display: flex;
    flex-direction: column;
    align-items: center;
    width: 16px;
    background: var(--chrome);
}

.up {
    transform: rotate(180deg);
}

.vscroll .thumb {
    width: 15px;
    background: var(--thumb);
}

.props-scroll {
    padding: 6px 0 5px;
    justify-content: space-between;
}

.props-scroll .thumb {
    height: 189px;
    margin: 22px 0 auto;
}

.palette-foot {
    display: flex;
    justify-content: space-between;
    align-items: center;
    height: 26px;
    padding: 2px 4px 2px 3px;
}

.palette-foot a {
    color: #0066cc;
}

.palette-foot button {
    width: 73px;
    height: 21px;
    line-height: 19px;
    background: #ccc;
    border: 1px solid #bfbfbf;
    color: #838383;
}

/* drawing view */
.view {
    flex: 1;
    display: grid;
    grid-template: minmax(0, 1fr) 20px / minmax(0, 1fr) 18px;
    margin-left: 4px;
    border-left: 2px solid #6e6e6e;
    border-top: 1px solid #6e6e6e;
}

.canvas {
    position: relative;
    background: #fff;
    overflow: hidden;
}

.model {
    position: absolute;
    left: 115px;
    top: 19px;
    shape-rendering: crispEdges;
}

.doc-buttons {
    position: absolute;
    right: 5px;
    top: 8px;
    display: flex;
    gap: 5px;
}

.view-cube {
    position: absolute;
    right: 16px;
    top: 65px;
}

.view-cube text {
    font-family: "Liberation Sans", sans-serif;
    font-size: 6px;
    fill: #888;
}

.nav-bar {
    position: absolute;
    right: 1px;
    top: 144px;
    width: 36px;
    height: 40px;
    padding: 3px 2px;
    display: flex;
    justify-content: flex-end;
    border: 2px solid #bbb;
    border-radius: 6px;
    background: #f3f3f3;
}

.view-scroll {
    padding: 7px 0 6px;
}

.view-scroll .thumb {
    height: 17px;
    margin: 222px -4px auto auto;
    width: 8px;
}

.view-controls {
    grid-column: 1 / -1;
    display: flex;
    align-items: center;
    padding: 0 0 4px 24px;
}

.scale {
    width: 53px;
    text-align: left;
}

.vc {
    display: grid;
    place-items: center;
    width: 21px;
    height: 16px;
}

.view-controls .left {
    margin-left: 5px;
}

.htrack {
    flex: 1;
    height: 16px;
    padding-left: 340px;
}

.htrack i {
    display: block;
    width: 17px;
    height: 15px;
    background: var(--thumb);
}

/* project browser */
.browser {
    position: absolute;
    right: 10px;
    top: 167px;
    width: 220px;
    padding: 3px 4px 4px 3px;
    background: var(--chrome);
    border: 1px solid #ddd;
    border-right: 2px solid #777;
    border-bottom: 2px solid #777;
}

.browser .palette-title {
    height: 23px;
    font-weight: 700;
    padding: 0 2px;
}

.browser-body {
    display: flex;
    height: 290px;
    border-left: 1px solid #777;
    border-top: 2px solid #777;
    background: #fff;
}

.tree {
    flex: 1;
    min-width: 0;
}

.node {
    display: flex;
    height: 18px;
    line-height: 18px;
}

.node span {
    flex: 1;
    min-width: 0;
    padding-left: 3px;
    overflow: hidden;
    white-space: nowrap;
}

.node .current {
    background: #e3e3e3;
    font-weight: 700;
}

.g {
    --dots: repeating-linear-gradient(#999 0 1px, transparent 1px 2px);
    --hdots: repeating-linear-gradient(90deg, #999 0 1px, transparent 1px 2px);
    flex: none;
    display: grid;
    place-items: center;
    width: 20px;
    height: 18px;
}

.g.v {
    background: var(--dots) 9px 0 / 1px 100% no-repeat;
}

.g.top.h {
    background: var(--dots) 9px 9px / 1px 9px no-repeat, var(--hdots) 10px 9px / 10px 1px no-repeat;
}

.g.v.h {
    background: var(--dots) 9px 0 / 1px 100% no-repeat, var(--hdots) 10px 9px / 10px 1px no-repeat;
}

.g.end.h {
    background: var(--dots) 9px 0 / 1px 9px no-repeat, var(--hdots) 10px 9px / 10px 1px no-repeat;
}

.dash {
    flex: none;
    width: 4px;
    background: repeating-linear-gradient(90deg, #999 0 1px, transparent 1px 2px) 0 9px / 100% 1px no-repeat;
}

/* expand / collapse boxes */
.tg {
    width: 9px;
    height: 9px;
    margin: 1px 1px 0 0;
    border: 1px solid #919191;
    background: linear-gradient(#2b3f8f, #2b3f8f) 1px 3px / 5px 1px no-repeat #f8f8f8;
}

.tg.plus {
    background: linear-gradient(#2b3f8f, #2b3f8f) 1px 3px / 5px 1px no-repeat, linear-gradient(#2b3f8f, #2b3f8f) 3px 1px / 1px 5px no-repeat #f8f8f8;
}

.ic {
    flex: none;
    display: grid;
    place-items: center;
    width: 20px;
}

.tree-scroll {
    padding: 6px 0;
}

.tree-scroll .thumb {
    flex: 1;
    margin: 5px 0 22px;
}

.hscroll {
    display: flex;
    align-items: center;
    height: 15px;
    padding: 0 22px 0 7px;
}

.hscroll i {
    width: 120px;
    height: 15px;
    margin: 0 auto 0 5px;
    background: var(--thumb);
}

/* status bar */
.status {
    display: flex;
    align-items: center;
    gap: 3px;
    height: 23px;
    padding-left: 2px;
    border-top: 1px solid var(--line);
    background: linear-gradient(#e2e2e2, #c6c6c6);
}

.status p {
    width: 345px;
    white-space: nowrap;
}

.st {
    display: flex;
    align-items: center;
    justify-content: center;
    gap: 3px;
    width: 23px;
    height: 20px;
    background: #d5d5d5;
}

.st.count {
    width: 52px;
    justify-content: flex-start;
    padding-left: 4px;
}

.status .select-box {
    height: 21px;
    background: #fff;
    border-color: #ddd;
    color: #777;
}

.status .select-box svg {
    top: 11px;
}

.workset {
    width: 205px;
}

.design {
    width: 156px;
}

.picks {
    display: flex;
    gap: 3px;
    margin-left: auto;
    padding-right: 18px;
}
```
